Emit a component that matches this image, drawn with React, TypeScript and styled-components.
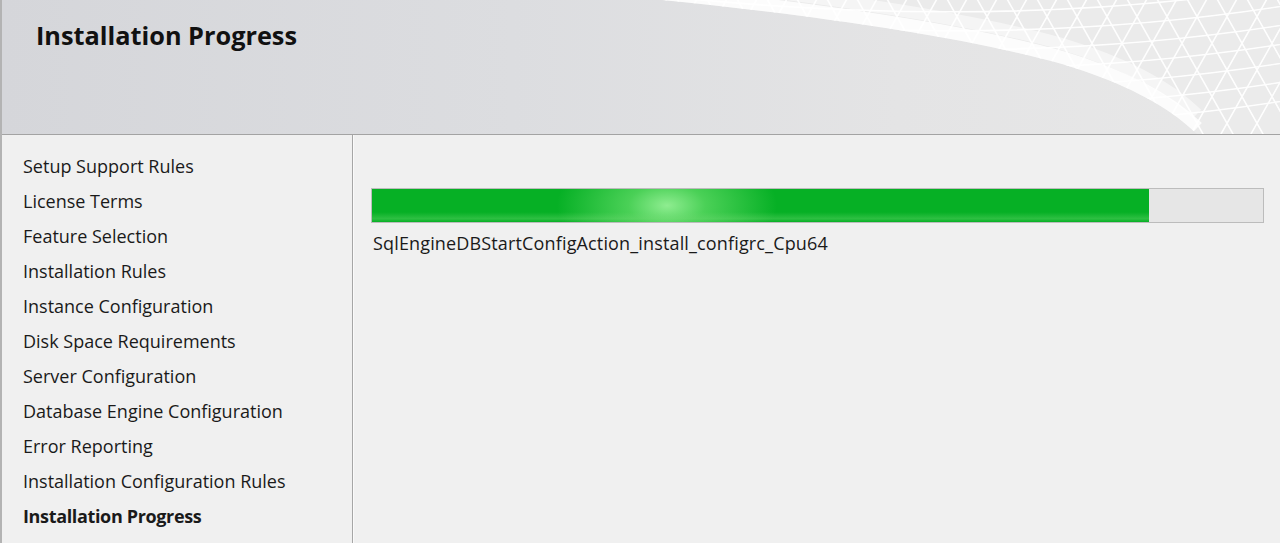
import React from "react";
import styled, { createGlobalStyle } from "styled-components";

const Global = createGlobalStyle`
  html, body { margin: 0; padding: 0; background: #f0f0f0; }
  body { font-family: "Open Sans", "Noto Sans", sans-serif; }
`;

const Window = styled.div`
  width: 1280px;
  height: 543px;
  overflow: hidden;
  display: flex;
  flex-direction: column;
  background: #f0f0f0;
  box-sizing: border-box;
  border-left: 2px solid #b3b3b3;
`;

const Header = styled.header`
  position: relative;
  height: 135px;
  flex: none;
  box-sizing: border-box;
  border-bottom: 1px solid #a3a3a3;
  background: linear-gradient(90deg, #d5d6da 0%, #dcdde0 40%, #e4e4e5 70%, #e8e8e8 100%);
  overflow: hidden;
`;

const Title = styled.h1`
  position: relative;
  z-index: 1;
  margin: 0;
  padding: 18px 0 0 34px;
  font-family: "Open Sans", sans-serif;
  font-weight: 700;
  font-size: 25.3px;
  line-height: 34px;
  color: #111;
`;

const Swoosh = styled.svg`
  position: absolute;
  top: 0;
  left: 0;
  pointer-events: none;
`;

const Body = styled.div`
  flex: 1;
  display: flex;
  min-height: 0;
`;

const Nav = styled.nav`
  width: 350px;
  flex: none;
  box-sizing: content-box;
  border-right: 1px solid #a6a6a6;
  box-shadow: 1px 0 0 #fafafa;
  padding-top: 14px;
  display: flex;
  flex-direction: column;
`;

const NavItem = styled.div<{ $active?: boolean }>`
  height: 35px;
  line-height: 35px;
  padding-left: 21px;
  font-size: 18px;
  font-weight: ${(p) => (p.$active ? 700 : 400)};
  color: #1a1a1a;
  letter-spacing: ${(p) => (p.$active ? "-0.35px" : "0px")};
  white-space: nowrap;
`;

const Content = styled.main`
  flex: 1;
  padding: 53px 0 0 18px;
  box-sizing: border-box;
`;

const Bar = styled.div`
  width: 893px;
  height: 35px;
  box-sizing: border-box;
  border: 1px solid #bcbcbc;
  background: #e6e6e6;
  position: relative;
  overflow: hidden;
`;

const Fill = styled.div`
  height: 100%;
  background:
    linear-gradient(180deg, rgba(255,255,255,0) 70%, rgba(120,220,120,0.35) 90%, rgba(255,255,255,0) 100%),
    radial-gradient(ellipse 110px 60px at 295px 50%, rgba(150,240,150,0.95) 0%, rgba(120,230,120,0.6) 35%, rgba(6,176,37,0) 100%),
    #06b025;
`;

const Status = styled.div`
  margin-top: 7px;
  padding-left: 2px;
  font-size: 18px;
  line-height: 26px;
  color: #1a1a1a;
  letter-spacing: 0.15px;
`;

const steps = [
  "Setup Support Rules",
  "License Terms",
  "Feature Selection",
  "Installation Rules",
  "Instance Configuration",
  "Disk Space Requirements",
  "Server Configuration",
  "Database Engine Configuration",
  "Error Reporting",
  "Installation Configuration Rules",
  "Installation Progress",
];

function Mesh() {
  const curve = "M 660 0 C 800 14, 960 36, 1060 64 C 1120 82, 1165 105, 1195 134 L 1280 134 L 1280 0 Z";
  const lines: React.ReactNode[] = [];
  for (let i = -30; i < 40; i++) {
    const x = 700 + i * 30;
    lines.push(<line key={"a" + i} x1={x} y1={-10} x2={x + 90} y2={150} />);
    lines.push(<line key={"b" + i} x1={x} y1={-10} x2={x - 90} y2={150} />);
  }
  for (let j = 0; j < 8; j++) {
    const y = 5 + j * 19;
    lines.push(<path key={"h" + j} d={`M 640 ${y - 30} Q 1000 ${y + 10} 1300 ${y - 40}`} fill="none" />);
  }
  return (
    <Swoosh width="1280" height="134" viewBox="0 0 1280 134">
      <defs>
        <clipPath id="swc">
          <path d={curve} />
        </clipPath>
      </defs>
      <g clipPath="url(#swc)">
        <rect x="0" y="0" width="1280" height="134" fill="#ebebeb" />
        <g stroke="#ffffff" strokeWidth="1.6" opacity="0.95">{lines}</g>
        <path d="M 660 -6 C 800 8, 960 30, 1060 58 C 1120 76, 1165 99, 1195 128" fill="none" stroke="#ffffff" strokeWidth="14" opacity="0.85" />
        <path d="M 660 -20 C 800 -6, 960 16, 1060 44 C 1120 62, 1165 85, 1195 114" fill="none" stroke="#ffffff" strokeWidth="12" opacity="0.5" />
      </g>
    </Swoosh>
  );
}

export default function App() {
  return (
    <>
      <Global />
      <Window>
        <Header>
          <Mesh />
          <Title>Installation Progress</Title>
        </Header>
        <Body>
          <Nav>
            {steps.map((s, i) => (
              <NavItem key={s} $active={i === steps.length - 1}>
                {s}
              </NavItem>
            ))}
          </Nav>
          <Content>
            <Bar>
              <Fill style={{ width: `${(777 / 891) * 100}%` }} />
            </Bar>
            <Status>SqlEngineDBStartConfigAction_install_configrc_Cpu64</Status>
          </Content>
        </Body>
      </Window>
    </>
  );
}
